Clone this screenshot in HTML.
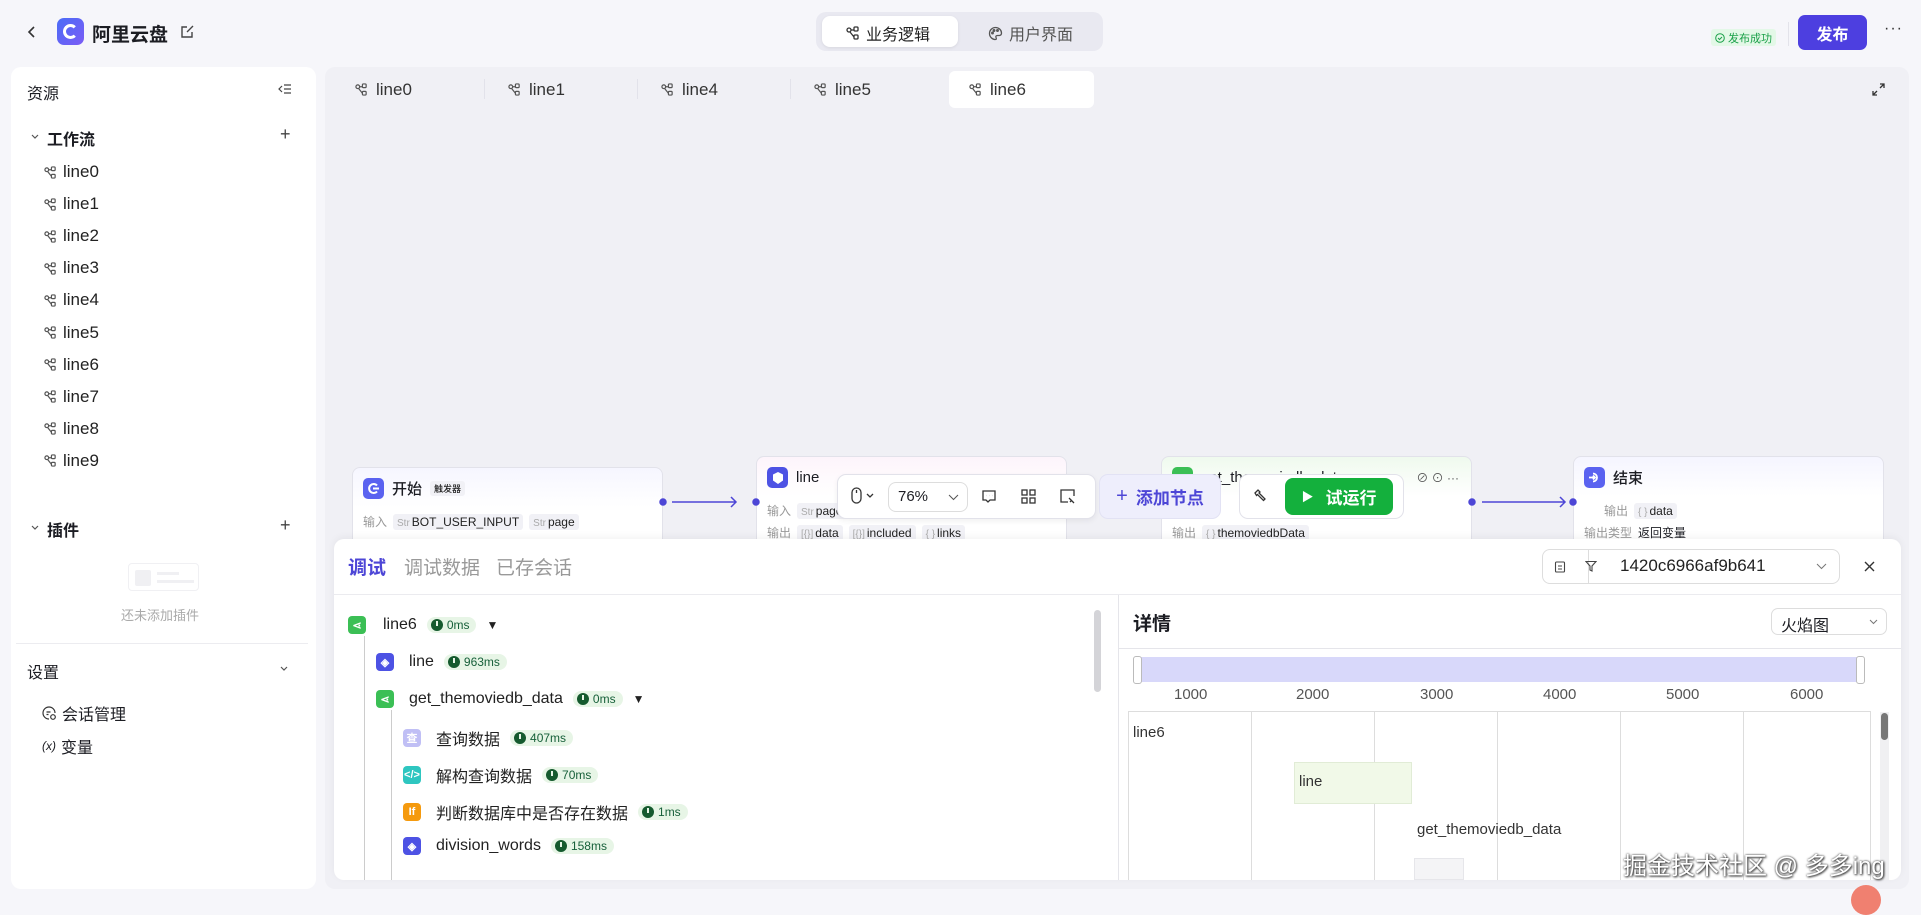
<!DOCTYPE html>
<html><head><meta charset="utf-8"><style>
*{box-sizing:border-box;margin:0;padding:0}
body{width:1921px;height:902px;overflow:hidden;background:#f6f6fa;font-family:"Liberation Sans","Noto Sans CJK SC",sans-serif;color:#1c1d23;position:relative}
.a{position:absolute}
.ic{display:inline-block;vertical-align:middle}
.side{left:11px;top:67px;width:305px;height:822px;background:#fff;border-radius:10px}
.canvas{left:325px;top:67px;width:1584px;height:822px;background:#f0f0f5;border-radius:10px}
.tab{top:71px;height:37px;width:145px;font-size:17px;color:#333;display:flex;align-items:center;padding-left:20px;gap:8px;border-radius:6px}
.item{left:44px;font-size:17px;color:#222;display:flex;align-items:center;gap:6px}
.node{background:#fff;border:1px solid #e2e2ea;border-radius:8px;height:100px}
.nt{font-size:15px;font-weight:500;display:flex;align-items:center;gap:8px}
.ni{width:21px;height:21px;border-radius:5px;display:inline-flex;align-items:center;justify-content:center}
.tag{background:#f1f1f6;border-radius:3px;padding:1px 4px;font-size:12px;color:#222}
.tag s{text-decoration:none;color:#aaa;font-size:10px;margin-right:2px}
.lbl{font-size:12px;color:#999}
.row{display:flex;align-items:center;gap:10px;font-size:16px;color:#222}
.ti{width:18px;height:18px;border-radius:4px;display:inline-flex;align-items:center;justify-content:center;color:#fff;font-size:11px;font-weight:bold}
.ms{background:#e7f5e6;border-radius:10px;padding:1px 7px 1px 4px;font-size:12px;color:#17603a;display:inline-flex;align-items:center;gap:4px}
.ms i{width:12px;height:12px;border-radius:50%;background:#155a2e;display:inline-block;position:relative}
.ms i:after{content:"";position:absolute;left:5px;top:2px;width:2px;height:5px;background:#e7f5e6}
.ax{top:686px;font-size:15px;color:#555}
.vl{top:711px;width:1px;height:169px;background:#ddd}
</style></head><body>

<!-- top bar -->
<svg class="a" style="left:26px;top:25px" width="12" height="14" viewBox="0 0 12 14"><path d="M8 2 L3 7 L8 12" stroke="#333" stroke-width="1.6" fill="none"/></svg>
<div class="a" style="left:57px;top:18px;width:27px;height:27px;border-radius:7px;background:linear-gradient(135deg,#4a6cf7,#7b5cf5)"><div style="position:absolute;left:6px;top:6px;width:15px;height:15px;border-radius:50%;border:3.5px solid #fff;border-right-color:transparent"></div></div>
<div class="a" style="left:92px;top:20px;font-size:19px;font-weight:bold">阿里云盘</div>
<svg class="a" style="left:180px;top:24px" width="15" height="15" viewBox="0 0 15 15"><path d="M12 8v5H2V3h5M7 8l6-6" stroke="#444" stroke-width="1.4" fill="none"/></svg>

<div class="a" style="left:816px;top:12px;width:287px;height:39px;background:#e9e9f1;border-radius:10px"></div>
<div class="a" style="left:822px;top:16px;width:136px;height:31px;background:#fff;border-radius:8px;box-shadow:0 1px 3px rgba(0,0,0,.08)"></div>
<div class="a" style="left:846px;top:21px;font-size:16px;color:#222;display:flex;gap:6px;align-items:center"><svg width="14" height="14" viewBox="0 0 14 14" fill="none" stroke="#333" stroke-width="1.3"><circle cx="3" cy="4" r="2"/><rect x="8" y="1" width="4" height="4" rx="1"/><rect x="8" y="9" width="4" height="4" rx="1"/><path d="M5 4h3M4 6l4 5"/></svg>业务逻辑</div>
<div class="a" style="left:988px;top:21px;font-size:16px;color:#555;display:flex;gap:6px;align-items:center"><svg width="15" height="15" viewBox="0 0 15 15" fill="none" stroke="#555" stroke-width="1.3"><path d="M7.5 1.5a6 6 0 1 0 0 12c1 0 1-1 .5-2s0-2 1.5-2h2a2.5 2.5 0 0 0 2-2.5c0-3-2.700-5.500-6-5.500z"/><circle cx="4.500" cy="7" r=".8"/><circle cx="6" cy="4.500" r=".8"/><circle cx="9.500" cy="4.500" r=".8"/></svg>用户界面</div>

<div class="a" style="left:1711px;top:29px;height:17px;padding:0 4px;background:#e3f8e7;border-radius:3px;font-size:11px;color:#1aa048;display:flex;align-items:center;gap:3px"><svg width="10" height="10" viewBox="0 0 10 10" fill="none" stroke="#1aa048"><circle cx="5" cy="5" r="4.300"/><path d="M3 5l1.500 1.500L7 4"/></svg>发布成功</div>
<div class="a" style="left:1788px;top:22px;width:1px;height:24px;background:#e3e3ea"></div>
<div class="a" style="left:1798px;top:15px;width:69px;height:35px;background:#4d3fe0;border-radius:7px;color:#fff;font-size:16px;font-weight:bold;display:flex;align-items:center;justify-content:center">发布</div>
<div class="a" style="left:1884px;top:20px;font-size:16px;color:#333;letter-spacing:1px">···</div>

<!-- sidebar -->
<div class="a side"></div>
<div class="a" style="left:27px;top:80px;font-size:16px">资源</div>
<svg class="a" style="left:278px;top:83px" width="14" height="12" viewBox="0 0 14 12" fill="none" stroke="#444" stroke-width="1.2"><path d="M4 3L1 6l3 3M6 2h7M6 6h7M6 10h7"/></svg>
<svg class="a" style="left:30px;top:133px" width="10" height="8" viewBox="0 0 10 8"><path d="M2 2l3 3 3-3" stroke="#555" fill="none" stroke-width="1.2"/></svg>
<div class="a" style="left:47px;top:126px;font-size:16px;font-weight:bold">工作流</div>
<div class="a" style="left:280px;top:124px;font-size:18px;color:#444">+</div>
<div id="wf"></div>
<svg class="a" style="left:30px;top:524px" width="10" height="8" viewBox="0 0 10 8"><path d="M2 2l3 3 3-3" stroke="#555" fill="none" stroke-width="1.2"/></svg>
<div class="a" style="left:47px;top:517px;font-size:16px;font-weight:bold">插件</div>
<div class="a" style="left:280px;top:515px;font-size:18px;color:#444">+</div>
<div class="a" style="left:128px;top:563px;width:71px;height:28px;border:1px solid #f0f0f3;border-radius:4px"><div style="position:absolute;left:6px;top:6px;width:16px;height:16px;background:#f0f0f3;border-radius:2px"></div><div style="position:absolute;left:28px;top:8px;width:22px;height:3px;background:#f0f0f3"></div><div style="position:absolute;left:28px;top:16px;width:37px;height:3px;background:#f0f0f3"></div></div>
<div class="a" style="left:121px;top:605px;font-size:13px;color:#aaa">还未添加插件</div>
<div class="a" style="left:16px;top:643px;width:292px;height:1px;background:#ececf0"></div>
<div class="a" style="left:27px;top:659px;font-size:16px">设置</div>
<svg class="a" style="left:279px;top:665px" width="10" height="8" viewBox="0 0 10 8"><path d="M2 2l3 3 3-3" stroke="#555" fill="none" stroke-width="1.2"/></svg>
<div class="a" style="left:42px;top:701px;font-size:16px;display:flex;gap:5px;align-items:center"><svg width="15" height="15" viewBox="0 0 15 15" fill="none" stroke="#333" stroke-width="1.2"><path d="M7 13a6 6 0 1 1 6-6"/><path d="M4.500 6h4M4.500 8.500h2"/><circle cx="11" cy="11" r="2.300"/></svg>会话管理</div>
<div class="a" style="left:42px;top:734px;font-size:16px;display:flex;gap:5px;align-items:center"><span style="font-size:12px;font-style:italic">(x)</span>变量</div>

<!-- canvas -->
<div class="a canvas"></div>
<div id="tabs"></div>
<svg class="a" style="left:1872px;top:83px" width="13" height="13" viewBox="0 0 13 13" fill="none" stroke="#333" stroke-width="1.3"><path d="M8 1h4v4M12 1L8 5M5 12H1V8M1 12l4-4"/></svg>

<!-- nodes -->
<div class="a node" style="left:352px;top:467px;width:311px;background:linear-gradient(#f6f6ff,#fff 40%)">
 <div class="nt" style="position:absolute;left:10px;top:10px"><span class="ni" style="background:#5a62f0"><svg width="13" height="13" viewBox="0 0 13 13" fill="none" stroke="#fff" stroke-width="2"><path d="M10 3.500A4.500 4.500 0 1 0 10 9.500"/><path d="M6 6.500h6"/></svg></span>开始 <span class="tag" style="font-size:9px">触发器</span></div>
 <div style="position:absolute;left:10px;top:45px;display:flex;gap:6px;align-items:center"><span class="lbl">输入</span><span class="tag"><s>Str</s>BOT_USER_INPUT</span><span class="tag"><s>Str</s>page</span></div>
</div>
<div class="a node" style="left:756px;top:456px;width:311px;background:linear-gradient(#fdf4fb,#fff 40%)">
 <div class="nt" style="position:absolute;left:10px;top:10px"><span class="ni" style="background:#4d52e4"><svg width="12" height="12" viewBox="0 0 12 12" fill="#fff"><path d="M6 0l5 2.500v6L6 12 1 8.500v-6z"/></svg></span>line</div>
 <div style="position:absolute;left:10px;top:45px;display:flex;gap:6px;align-items:center"><span class="lbl">输入</span><span class="tag"><s>Str</s>page</span></div>
 <div style="position:absolute;left:10px;top:67px;display:flex;gap:6px;align-items:center"><span class="lbl">输出</span><span class="tag"><s>[{}]</s>data</span><span class="tag"><s>[{}]</s>included</span><span class="tag"><s>{ }</s>links</span></div>
</div>
<div class="a node" style="left:1161px;top:456px;width:311px;background:linear-gradient(#effaee,#fff 40%)">
 <div class="nt" style="position:absolute;left:10px;top:10px"><span class="ni" style="background:#3bbf55"></span>get_themoviedb_data</div>
 <div style="position:absolute;right:12px;top:12px;font-size:12px;color:#555">⊘ ⊙ ···</div>
 <div style="position:absolute;left:10px;top:67px;display:flex;gap:6px;align-items:center"><span class="lbl">输出</span><span class="tag"><s>{ }</s>themoviedbData</span></div>
</div>
<div class="a node" style="left:1573px;top:456px;width:311px;background:linear-gradient(#f5f5ff,#fff 40%)">
 <div class="nt" style="position:absolute;left:10px;top:10px"><span class="ni" style="background:#5a62f0"><svg width="13" height="13" viewBox="0 0 13 13" fill="none" stroke="#fff" stroke-width="1.8"><path d="M5 2.500A4 4 0 1 1 5 10.500"/><path d="M1 6.500h6M5 4.500l2 2-2 2"/></svg></span>结束</div>
 <div style="position:absolute;left:30px;top:45px;display:flex;gap:6px;align-items:center"><span class="lbl">输出</span><span class="tag"><s>{ }</s>data</span></div>
 <div style="position:absolute;left:10px;top:67px;display:flex;gap:6px;align-items:center"><span class="lbl">输出类型</span><span style="font-size:12px">返回变量</span></div>
</div>
<!-- edges -->
<svg class="a" style="left:655px;top:494px" width="930" height="16" viewBox="0 0 930 16" fill="none" stroke="#4d46d6" stroke-width="1.5">
<circle cx="8" cy="8" r="3" fill="#4d46d6"/><path d="M17 8h64M76 3l5 5-5 5"/><circle cx="101" cy="8" r="3" fill="#4d46d6"/>
<circle cx="817" cy="8" r="3" fill="#4d46d6"/><path d="M827 8h83M905 3l5 5-5 5"/><circle cx="918" cy="8" r="3" fill="#4d46d6"/>
</svg>
<!-- toolbar -->
<div class="a" style="left:837px;top:474px;width:259px;height:45px;background:#fff;border:1px solid #e2e2ea;border-radius:9px;box-shadow:0 2px 6px rgba(0,0,0,.06)"></div>
<svg class="a" style="left:851px;top:487px" width="26" height="18" viewBox="0 0 26 18" fill="none" stroke="#333" stroke-width="1.3"><rect x="1" y="1" width="9" height="15" rx="4.500"/><path d="M5.500 3v3M16 7l3 3 3-3"/></svg>
<div class="a" style="left:888px;top:482px;width:80px;height:30px;border:1px solid #ddd;border-radius:8px;font-size:15px;padding:5px 9px">76%<svg style="position:absolute;right:8px;top:11px" width="11" height="7" viewBox="0 0 11 7"><path d="M1 1l4.500 4.500L10 1" stroke="#555" fill="none"/></svg></div>
<svg class="a" style="left:981px;top:489px" width="16" height="16" viewBox="0 0 16 16" fill="none" stroke="#333" stroke-width="1.3"><path d="M2 2h12v9H9l-2 2-2-2H2z"/><path d="M5 6.500h.1M8 6.500h.1M11 6.500h.1"/></svg>
<svg class="a" style="left:1021px;top:489px" width="15" height="15" viewBox="0 0 15 15" fill="none" stroke="#333" stroke-width="1.3"><rect x="1" y="1" width="5" height="5"/><rect x="9" y="1" width="5" height="5"/><rect x="1" y="9" width="5" height="5"/><rect x="9" y="9" width="5" height="5"/></svg>
<svg class="a" style="left:1060px;top:489px" width="16" height="15" viewBox="0 0 16 15" fill="none" stroke="#333" stroke-width="1.3"><path d="M8 13H1V1h13v6"/><path d="M9 9l5 5M10 13l2-2"/></svg>
<div class="a" style="left:1099px;top:474px;width:122px;height:45px;background:#eeeefc;border:1px solid #e2e2f4;border-radius:9px;color:#4d46d6;font-size:17px;font-weight:bold;display:flex;align-items:center;justify-content:center;gap:8px"><span style="font-weight:normal;font-size:20px">+</span>添加节点</div>
<div class="a" style="left:1239px;top:474px;width:165px;height:45px;background:#fff;border:1px solid #e2e2ea;border-radius:9px"></div>
<svg class="a" style="left:1253px;top:488px" width="16" height="16" viewBox="0 0 16 16" fill="none" stroke="#333" stroke-width="1.3"><path d="M2 5l3-3 2 2-1 1 6 6-1.500 1.500-6-6-1 1z"/></svg>
<div class="a" style="left:1285px;top:478px;width:108px;height:37px;background:#14b03d;border-radius:8px;color:#fff;font-size:17px;font-weight:bold;display:flex;align-items:center;justify-content:center;gap:12px"><span style="font-size:12px">▶</span>试运行</div>

<!-- bottom panel -->
<div class="a" style="left:334px;top:539px;width:1567px;height:341px;background:#fff;border-radius:10px;box-shadow:0 -2px 8px rgba(0,0,0,.05)"></div>
<div class="a" style="left:348px;top:553px;font-size:19px;color:#4d46d6;font-weight:bold">调试</div>
<div class="a" style="left:404px;top:553px;font-size:19px;color:#999">调试数据</div>
<div class="a" style="left:496px;top:553px;font-size:19px;color:#999">已存会话</div>
<div class="a" style="left:1542px;top:549px;width:298px;height:35px;border:1px solid #ddd;border-radius:8px"></div>
<div class="a" style="left:1588px;top:550px;width:1px;height:33px;background:#ddd"></div>
<svg class="a" style="left:1554px;top:561px" width="12" height="12" viewBox="0 0 12 12" fill="none" stroke="#444" stroke-width="1.1"><rect x="1.500" y="1" width="9" height="10" rx="1"/><path d="M4 5h4M4 8h4"/></svg>
<svg class="a" style="left:1585px;top:560px" width="12" height="13" viewBox="0 0 12 13" fill="none" stroke="#444" stroke-width="1.1"><path d="M1 1.500h10L7 6v5L5 10V6z"/></svg>
<div class="a" style="left:1620px;top:556px;font-size:17px;color:#222">1420c6966af9b641</div>
<svg class="a" style="left:1816px;top:563px" width="11" height="7" viewBox="0 0 11 7"><path d="M1 1l4.500 4.500L10 1" stroke="#777" fill="none"/></svg>
<svg class="a" style="left:1864px;top:561px" width="11" height="11" viewBox="0 0 11 11"><path d="M1 1l9 9M10 1l-9 9" stroke="#333" stroke-width="1.4"/></svg>
<div class="a" style="left:334px;top:594px;width:1567px;height:1px;background:#ebebef"></div>
<div class="a" style="left:1118px;top:595px;width:1px;height:285px;background:#e5e5ea"></div>
<div class="a" style="left:1094px;top:610px;width:7px;height:82px;background:#d4d4d8;border-radius:4px"></div>

<!-- tree -->
<div class="a" style="left:364px;top:636px;width:1px;height:244px;background:#ccc"></div>
<div class="a" style="left:391px;top:710px;width:1px;height:170px;background:#ccc"></div>
<div class="a row" style="left:348px;top:616px"><span class="ti" style="background:#3bbf55">⋖</span><span style="margin-left:7px">line6</span><span class="ms"><i></i>0ms</span><span style="font-size:12px">▼</span></div>
<div class="a row" style="left:376px;top:653px"><span class="ti" style="background:#4d52e4">◈</span><span style="margin-left:5px">line</span><span class="ms"><i></i>963ms</span></div>
<div class="a row" style="left:376px;top:690px"><span class="ti" style="background:#3bbf55">⋖</span><span style="margin-left:5px">get_themoviedb_data</span><span class="ms"><i></i>0ms</span><span style="font-size:12px">▼</span></div>
<div class="a row" style="left:403px;top:726px"><span class="ti" style="background:#c0bff5">查</span><span style="margin-left:5px">查询数据</span><span class="ms"><i></i>407ms</span></div>
<div class="a row" style="left:403px;top:763px"><span class="ti" style="background:#2ec6c0">&lt;/&gt;</span><span style="margin-left:5px">解构查询数据</span><span class="ms"><i></i>70ms</span></div>
<div class="a row" style="left:403px;top:800px"><span class="ti" style="background:#f59a0e">If</span><span style="margin-left:5px">判断数据库中是否存在数据</span><span class="ms"><i></i>1ms</span></div>
<div class="a row" style="left:403px;top:837px"><span class="ti" style="background:#4d52e4">◈</span><span style="margin-left:5px">division_words</span><span class="ms"><i></i>158ms</span></div>

<!-- details -->
<div class="a" style="left:1133px;top:609px;font-size:19px;font-weight:bold">详情</div>
<div class="a" style="left:1771px;top:608px;width:116px;height:27px;border:1px solid #ddd;border-radius:7px;font-size:16px;padding:3px 9px">火焰图<svg style="position:absolute;right:8px;top:10px" width="9" height="6" viewBox="0 0 9 6"><path d="M1 1l3.500 3.500L8 1" stroke="#777" fill="none"/></svg></div>
<div class="a" style="left:1119px;top:648px;width:782px;height:1px;background:#e5e5ea"></div>
<div class="a" style="left:1138px;top:657px;width:725px;height:25px;background:#d8d8fa"></div>
<div class="a" style="left:1133px;top:656px;width:9px;height:28px;background:#fff;border:1px solid #bbb;border-radius:3px"></div>
<div class="a" style="left:1856px;top:656px;width:9px;height:28px;background:#fff;border:1px solid #bbb;border-radius:3px"></div>
<div class="a ax" style="left:1174px">1000</div><div class="a ax" style="left:1296px">2000</div><div class="a ax" style="left:1420px">3000</div><div class="a ax" style="left:1543px">4000</div><div class="a ax" style="left:1666px">5000</div><div class="a ax" style="left:1790px">6000</div>
<div class="a" style="left:1128px;top:711px;width:743px;height:169px;border:1px solid #ddd;border-bottom:none"></div>
<div class="a vl" style="left:1251px"></div><div class="a vl" style="left:1374px"></div><div class="a vl" style="left:1497px"></div><div class="a vl" style="left:1620px"></div><div class="a vl" style="left:1743px"></div>
<div class="a" style="left:1133px;top:724px;font-size:15px;color:#333">line6</div>
<div class="a" style="left:1294px;top:762px;width:118px;height:42px;background:#f1f9e8;border:1px solid #e1ecd6;font-size:15px;color:#333;padding:10px 4px">line</div>
<div class="a" style="left:1417px;top:821px;font-size:15px;color:#333">get_themoviedb_data</div>
<div class="a" style="left:1414px;top:858px;width:50px;height:22px;background:#f4f4f6;border:1px solid #e6e6ea"></div>
<div class="a" style="left:1880px;top:712px;width:9px;height:168px;background:#f0f0f2"></div>
<div class="a" style="left:1881px;top:713px;width:7px;height:27px;background:#777;border-radius:4px"></div>
<div class="a" style="left:1623px;top:846px;font-size:24px;color:#fff;text-shadow:0 0 2px #333,1px 1px 2px #333">掘金技术社区 @ 多多ing</div>
<div class="a" style="left:1851px;top:885px;width:30px;height:30px;border-radius:50%;background:#f08070"></div>

<script>
var h='';for(var i=0;i<10;i++){h+='<div class="a item" style="top:'+(162+i*32.1)+'px"><svg width="13" height="13" viewBox="0 0 14 14" fill="none" stroke="#555" stroke-width="1.3"><circle cx="3" cy="4" r="2"/><rect x="8" y="1" width="4" height="4" rx="1"/><rect x="8" y="9" width="4" height="4" rx="1"/><path d="M5 4h3M4 6l4 5"/></svg>line'+i+'</div>'}
document.getElementById('wf').outerHTML=h;
var t=['line0','line1','line4','line5','line6'],s='';
for(var j=0;j<5;j++){var x=j<4?335+j*153:949;s+='<div class="a tab" style="left:'+x+'px;'+(j==4?'background:#fff;':'')+'"><svg width="13" height="13" viewBox="0 0 14 14" fill="none" stroke="#555" stroke-width="1.3"><circle cx="3" cy="4" r="2"/><rect x="8" y="1" width="4" height="4" rx="1"/><rect x="8" y="9" width="4" height="4" rx="1"/><path d="M5 4h3M4 6l4 5"/></svg>'+t[j]+'</div>';if(j>0&&j<4)s+='<div class="a" style="left:'+(335+j*153-4)+'px;top:79px;width:1px;height:20px;background:#e2e2ea"></div>'}
document.getElementById('tabs').outerHTML=s;
</script>
</body></html>
